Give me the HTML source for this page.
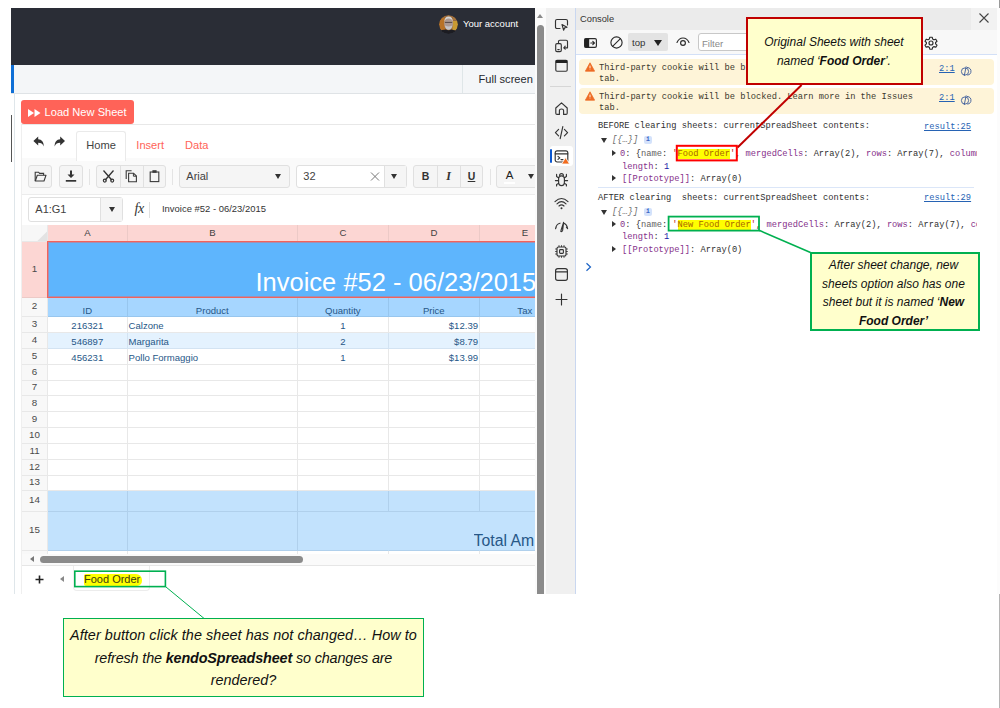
<!DOCTYPE html>
<html lang="en">
<head>
<meta charset="utf-8">
<title>kendoSpreadsheet refresh question</title>
<style>
*{box-sizing:border-box;margin:0;padding:0}
html,body{width:1000px;height:708px;overflow:hidden;background:#fff}
body{position:relative;font-family:"Liberation Sans",Arial,sans-serif;color:#424242}
.abs{position:absolute}
/* ---------- left: browser page ---------- */
#page{position:absolute;left:11px;top:8px;width:524px;height:586px;overflow:hidden;background:#fff}
#hdr{position:absolute;left:0;top:0;width:526px;height:57px;background:#2a2d36}
#acct{position:absolute;left:452px;top:10px;color:#fff;font-size:9.5px;line-height:12px;white-space:nowrap}
#avatar{position:absolute;left:427.5px;top:6.5px;width:19px;height:19px;border-radius:50%;overflow:hidden}
#bar{position:absolute;left:0;top:57px;width:526px;height:29px;background:#f4f6f8;border-bottom:1px solid #dfe3e6}
#bar .blue{position:absolute;left:0;top:0;width:3px;height:28px;background:#0f6fd6}
#bar .sep{position:absolute;left:451px;top:0;width:1px;height:28px;background:#dfe6e8}
#bar .fs{position:absolute;left:467.6px;top:6.5px;font-size:11.1px;line-height:14px;color:#24282e;white-space:nowrap}

/* spreadsheet chrome */
#vline{position:absolute;left:3px;top:86px;width:1px;height:500px;background:#dfe6ea}
#tick{position:absolute;left:0;top:107px;width:1px;height:47px;background:#555}
#load{position:absolute;left:10px;top:92px;width:113px;height:24px;background:#ff6358;border-radius:3px;color:#fff;font-size:11.1px;line-height:24.5px;white-space:nowrap;padding-left:6.8px}
#load svg{vertical-align:-0.5px;margin-right:3.8px}
#ss{position:absolute;left:10px;top:116px;width:520px;height:470px;border-top:1px solid #e8e8e8;border-left:1px solid #efefef;background:#fff}
#tabs{position:absolute;left:0;top:0;width:520px;height:33.5px;border-bottom:1px solid #e4e4e4}
#tabs .home{z-index:2;position:absolute;left:54px;top:6px;width:50px;height:29.5px;border:1px solid #eaeaea;border-bottom:0;border-radius:3px 3px 0 0;background:#fff;font-size:11.1px;line-height:27px;text-align:center;color:#424242}
#tabs .t{position:absolute;top:13px;font-size:11.1px;line-height:14px;color:#ff6358}
#tb{position:absolute;left:0;top:33px;width:520px;height:36.5px;background:#fafafa;border-bottom:1px solid #ececec}
.btn{position:absolute;top:7px;height:23px;background:#f5f5f5;border:1px solid #e0e0e0;border-radius:3px}
.vsep{position:absolute;top:11px;width:1px;height:16px;background:#e4e4e4}
.dv{position:absolute;top:0;width:1px;height:21px;background:#e0e0e0}
.ic{position:absolute;top:0;height:21px}
#fb{position:absolute;left:0;top:71px;width:520px;height:29px;background:#fff}
.lbl{position:absolute;left:6.3px;top:0;font-size:11px;line-height:21px;color:#424242}
.arr{position:absolute;top:8px;width:0;height:0;border-left:3.5px solid transparent;border-right:3.5px solid transparent;border-top:5px solid #333}
.ddb{position:absolute;top:0;height:21px;background:#f5f5f5;border-left:1px solid #e0e0e0}
.biu{position:absolute;top:0;width:23px;text-align:center;font-size:10.5px;line-height:21px;color:#333}
/* grid */
#grid{position:absolute;left:0;top:0;width:524px;height:586px;pointer-events:none}
.c{position:absolute;overflow:hidden;border-right:1px solid #e8e8e8;border-bottom:1px solid #e8e8e8;font-size:9.55px;white-space:nowrap;color:#275787}
.ch{background:#fcd6d3;border-color:#eccac7;text-align:center;color:#424242;line-height:15px;font-size:9.6px}
.rh{background:#f8f8f8;text-align:center;color:#4a4a4a;font-size:9.8px}
.rh.sel{background:#fcd6d3;border-color:#eccac7}
.d{line-height:15px}
.d span{position:absolute;bottom:-1.3px;left:0.6px;right:1px}
.ac span{text-align:center}.ar span{text-align:right}.al span{text-align:left}
.b2{background:#a6d6ff;border-color:#97c6ee}.b4{background:#e4f2fe;border-color:#d3e3f2}
.b14,.b15{background:#c2e2fd;border-color:#b0d0ec}
.r2 span{bottom:-2px}
#title{position:absolute;left:36px;top:233px;width:500px;height:57px;background:#5eb5fd;border:1px solid #f4625a;box-shadow:inset 0 0 0 1px rgba(244,98,90,.45);overflow:hidden}
#title span{position:absolute;left:207.5px;bottom:1px;font-size:25.5px;line-height:28px;color:#fff;white-space:nowrap}
/* bottom of spreadsheet */
#hs{position:absolute;left:11px;top:546px;width:513px;height:12px;background:#fafafa;border-bottom:1px solid #e6e6e6}
#hs .thumb{position:absolute;left:18px;top:2px;width:263px;height:7px;border-radius:4px;background:#8b8b8b}
#hs .la{position:absolute;left:8px;top:2px;width:0;height:0;border-top:3.5px solid transparent;border-bottom:3.5px solid transparent;border-right:4px solid #777}
#sheets{position:absolute;left:11px;top:558px;width:513px;height:28px;background:#fff}
#sheets .plus{position:absolute;left:13px;top:9px;width:9px;height:9px}
#sheets .pa{position:absolute;left:38px;top:10px;width:0;height:0;border-top:3px solid transparent;border-bottom:3px solid transparent;border-right:4px solid #888}
#sheets .tab{position:absolute;left:51px;top:0;width:77px;height:25px;border:1px solid #ececec;border-top:0;border-radius:0 0 4px 4px;background:#fff}
#sheets .name{position:absolute;left:62px;top:7px;font-size:11px;line-height:13px;color:#3a3a10;white-space:nowrap;z-index:2}
#sheets .hl{position:absolute;left:62px;top:8px;width:58px;height:12px;background:#ffff00;border-radius:2px 6px 5px 2px}
/* ---------- scrollbar + devtools ---------- */
#vs{position:absolute;left:535px;top:8px;width:11px;height:586px;background:#fbfbfb;overflow:hidden}
#vs .up{position:absolute;left:2px;top:6px;width:0;height:0;border-left:3.5px solid transparent;border-right:3.5px solid transparent;border-bottom:4.5px solid #8a8a8a}
#vs .thumb{position:absolute;left:2.3px;top:16.5px;width:7px;height:580px;border-radius:4px;background:#8b8b8b}
#act{position:absolute;left:546px;top:8px;width:29px;height:586px;background:#f0f0f0}
#act svg{position:absolute;left:8px;width:15px;height:15px;overflow:visible}
#act .sepl{position:absolute;left:4px;top:78px;width:21px;height:1px;background:#d6d6d6}
#act .active{position:absolute;left:4px;top:138px;width:23px;height:20px;background:#fff;border-radius:3px}
#act .abar{position:absolute;left:4px;top:141px;width:2px;height:14px;background:#0b57d0;border-radius:1px}
#con{position:absolute;left:575px;top:8px;width:425px;height:586px;background:#fff;border-left:1px solid #c9d7f0;overflow:hidden}
#chead{position:absolute;left:0;top:0;width:424px;height:22px;background:#ebebeb}
#chead .t{position:absolute;left:4px;top:4px;font-size:9.3px;line-height:14px;color:#333}
#ctool{position:absolute;left:0;top:22px;width:424px;height:25px;background:#f8f8f8;border-bottom:1px solid #d3e0f7}
#ctool svg{position:absolute;overflow:visible}
#ctool .top{position:absolute;left:52px;top:3px;width:40px;height:18px;background:#e3e3e3;border-radius:2px;font-size:9.6px;line-height:20px;color:#333;padding-left:4px;overflow:hidden}
#ctool .top i{position:absolute;left:26px;top:7px;width:0;height:0;border-left:4px solid transparent;border-right:4px solid transparent;border-top:6px solid #222}
#ctool .filter{position:absolute;left:122px;top:3px;width:218px;height:18px;border:1px solid #c8c8c8;border-radius:3px;background:#fff;font-size:9.6px;line-height:19px;color:#8a8a8a;padding-left:3px;overflow:hidden}
.mono{font-family:"Liberation Mono","DejaVu Sans Mono",monospace;font-size:8.72px;white-space:pre;color:#303030}
.warn{position:absolute;left:3px;width:415px;height:26px;background:#fef4d8;border-radius:4px}
.warn .tx{position:absolute;left:20px;top:3.9px;line-height:11.5px;color:#3d3a2e}
.warn svg{position:absolute;left:6px;top:3px}
.lnk{position:absolute;color:#2763b4;text-decoration:underline;line-height:12px}
.ln{position:absolute;line-height:12px}
.k{color:#86318a}.s{color:#c02a1d}.n{color:#1a1aa6}.g{color:#6e6e6e;font-style:italic}
.hy{background:#ffff00;color:#a86400}
.tri-d{position:absolute;width:0;height:0;border-left:3.4px solid transparent;border-right:3.4px solid transparent;border-top:5.4px solid #333}
.tri-r{position:absolute;width:0;height:0;border-top:3.4px solid transparent;border-bottom:3.4px solid transparent;border-left:4.8px solid #333}
.info{position:absolute;width:8px;height:8px;background:#d4e2fb;border-radius:2px;color:#3b65c4;font-size:6.5px;line-height:8px;text-align:center;font-family:"Liberation Mono",monospace;font-weight:bold}
/* ---------- annotations ---------- */
.co{position:absolute;background:#ffffcc;font-style:italic;color:#111;text-align:center;white-space:nowrap}
.co div{position:absolute;left:0;width:100%}
#co2 div{left:-1.2px}#co1 div{left:-0.4px}
.co b{font-weight:bold}
#ov{position:absolute;left:0;top:0;width:1000px;height:708px;pointer-events:none}
#edge{position:absolute;left:999px;top:594px;width:1px;height:114px;background:#b5b5b5}
</style>
</head>
<body>
<div id="page">
  <div id="hdr">
    <div id="avatar"><svg width="19" height="19" viewBox="0 0 19 19"><defs><filter id="bl" x="-10%" y="-10%" width="120%" height="120%"><feGaussianBlur stdDeviation="0.55"/></filter><clipPath id="avc"><circle cx="9.5" cy="9.5" r="9.5"/></clipPath></defs><g clip-path="url(#avc)"><g filter="url(#bl)"><rect x="-2" y="-2" width="23" height="23" fill="#9a6a3a"/><rect x="-2" y="3" width="8" height="12" fill="#b87228"/><rect x="13.5" y="6" width="8" height="9" fill="#c99a32"/><rect x="14" y="-2" width="7" height="7" fill="#a9743a"/><ellipse cx="9.6" cy="8.8" rx="4.5" ry="5.8" fill="#ab9891"/><path d="M5.3 7Q5.3 1.4 9.6 1.4Q13.9 1.4 13.9 7Q12.6 3.6 9.6 3.6Q6.6 3.6 5.3 7Z" fill="#d6d6d6"/><path d="M6 7.4H13.2" stroke="#4a3e3c" stroke-width="0.9"/><path d="M6 10.6Q9.6 12.4 13.2 10.6Q12.8 14.8 9.6 14.8Q6.4 14.8 6 10.6Z" fill="#c4c4c8"/><path d="M-2 21V16.4Q4 14.6 6.6 14.4Q9.6 16 12.6 14.4Q16 14.8 21 17.4V21Z" fill="#1d1e24"/></g></g></svg></div>
    <div id="acct">Your account</div>
  </div>
  <div id="bar"><div class="blue"></div><div class="sep"></div><div class="fs">Full screen</div></div>
  <div id="vline"></div><div id="tick"></div>
  <div id="load"><svg width="13" height="8" viewBox="0 0 13 8"><path d="M0 0L6 4L0 8Z M6.5 0L12.5 4L6.5 8Z" fill="#fff"/></svg>Load New Sheet</div>
  <div id="ss">
    <div id="tabs">
      <svg class="abs" style="left:11px;top:11px" width="34" height="12" viewBox="0 0 34 12"><path d="M5.2 0.6L0.4 5L5.2 9.4V6.8C8 6.8 9.8 7.8 10.8 10.6C10.8 6 8.8 3.6 5.2 3.3Z" fill="#333"/><path d="M27.2 0.6L32 5L27.2 9.4V6.8C24.4 6.8 22.6 7.8 21.6 10.6C21.6 6 23.6 3.6 27.2 3.3Z" fill="#333"/></svg>
      <div class="home">Home</div>
      <div class="t" style="left:114.3px">Insert</div>
      <div class="t" style="left:163px">Data</div>
    </div>
    <div id="tb">
      <div class="btn" style="left:6px;width:24px"><svg class="ic" style="left:5px" width="13" height="21" viewBox="0 0 13 21"><path d="M1.2 15V6.2H4.6L5.6 7.4H9.6V9.2" fill="none" stroke="#3a3a3a" stroke-width="1.1"/><path d="M1.3 15L3.3 9.3H12L10 15Z" fill="none" stroke="#3a3a3a" stroke-width="1.1" stroke-linejoin="round"/></svg></div>
      <div class="btn" style="left:37px;width:24px"><svg class="ic" style="left:5px" width="12" height="21" viewBox="0 0 12 21"><path d="M5 4.5H7V8.5H9.5L6 12L2.5 8.5H5Z" fill="#333"/><rect x="0.8" y="14" width="10.4" height="1.7" fill="#333"/></svg></div>
      <div class="vsep" style="left:67px"></div>
      <div class="btn" style="left:74px;width:70px"><div class="dv" style="left:23px"></div><div class="dv" style="left:46px"></div>
        <svg class="ic" style="left:5px" width="13" height="21" viewBox="0 0 13 21"><path d="M1.5 4.5L10 14.2M11.5 4.5L3 14.2" stroke="#333" stroke-width="1.3" fill="none"/><circle cx="2.8" cy="14.6" r="1.5" fill="none" stroke="#333" stroke-width="1.1"/><circle cx="10.2" cy="14.6" r="1.5" fill="none" stroke="#333" stroke-width="1.1"/></svg>
        <svg class="ic" style="left:28px" width="13" height="21" viewBox="0 0 13 21"><path d="M1.2 13V4.8H6.6" fill="none" stroke="#3a3a3a" stroke-width="1.1"/><path d="M3.6 7.2H8.6L11.4 10V15.8H3.6Z" fill="none" stroke="#3a3a3a" stroke-width="1.1"/><path d="M8.4 7.2V10.2H11.4" fill="none" stroke="#3a3a3a" stroke-width="1"/></svg>
        <svg class="ic" style="left:51px" width="13" height="21" viewBox="0 0 13 21"><rect x="2.2" y="6" width="8.6" height="9.6" fill="none" stroke="#3a3a3a" stroke-width="1.1"/><rect x="4.4" y="4.2" width="4.2" height="2.6" fill="#3a3a3a"/></svg>
      </div>
      <div class="vsep" style="left:150px"></div>
      <div class="btn" style="left:157px;width:111px"><span class="lbl">Arial</span><span class="arr" style="left:95px"></span></div>
      <div class="btn" style="left:274px;width:111px;background:#fff"><span class="lbl">32</span><svg class="ic" style="left:72px" width="12" height="21" viewBox="0 0 12 21"><path d="M2 6.5L10 14.5M10 6.5L2 14.5" stroke="#777" stroke-width="1"/></svg><div class="ddb" style="left:87px;width:22px"><span class="arr" style="left:6px"></span></div></div>
      <div class="btn" style="left:391px;width:70px"><div class="dv" style="left:23px"></div><div class="dv" style="left:46px"></div>
        <span class="biu" style="left:0;font-weight:bold">B</span><span class="biu" style="left:23px;font-style:italic;font-family:'Liberation Serif',serif;font-weight:bold;font-size:12px">I</span><span class="biu" style="left:46px;font-weight:bold;text-decoration:underline">U</span>
      </div>
      <div class="vsep" style="left:468px"></div>
      <div class="btn" style="left:474px;width:60px"><span class="biu" style="left:1px;font-weight:normal;font-size:11.5px;color:#222;top:-1.2px">A</span><div class="abs" style="left:7px;top:16px;width:11px;height:2px;background:#fff"></div><span class="arr" style="left:31px"></span></div>
    </div>
    <div id="fb">
      <div class="btn" style="left:6px;top:1px;width:95px;height:24.5px;background:#fff"><span class="lbl" style="left:6.3px;font-size:11px;line-height:22.5px">A1:G1</span><div class="ddb" style="left:71px;width:22px;height:22.5px"><span class="arr" style="left:7.5px;top:9.3px"></span></div></div>
      <div class="abs" style="left:112.5px;top:4.5px;font-family:'Liberation Serif',serif;font-style:italic;font-size:14px;line-height:16px;color:#333;letter-spacing:-0.5px"><b style="font-weight:normal">f</b>x</div>
      <div class="abs" style="left:127px;top:6px;width:1px;height:16px;background:#e0e0e0"></div>
      <div class="abs" style="left:140px;top:6px;font-size:9.45px;line-height:14px;color:#333;white-space:nowrap">Invoice #52 - 06/23/2015</div>
    </div>
  </div>
  <div id="grid">
      <div class="c " style="left:11px;top:217px;width:26px;height:17px;background:#f7f7f7"><svg width="26" height="16" viewBox="0 0 26 16" style="position:absolute;left:0;top:0"><path d="M25 6.4V16H15.4Z" fill="#e3e3e3"/></svg></div>
      <div class="c ch" style="left:37px;top:217px;width:80px;height:17px;"><span>A</span></div>
      <div class="c ch" style="left:117px;top:217px;width:170px;height:17px;"><span>B</span></div>
      <div class="c ch" style="left:287px;top:217px;width:91px;height:17px;"><span>C</span></div>
      <div class="c ch" style="left:378px;top:217px;width:91px;height:17px;"><span>D</span></div>
      <div class="c ch" style="left:469px;top:217px;width:91px;height:17px;"><span>E</span></div>
      <div class="c rh sel" style="left:11px;top:234px;width:26px;height:56px;line-height:53.5px">1</div>
      <div class="c rh" style="left:11px;top:290px;width:26px;height:19px;line-height:16.5px">2</div>
      <div class="c rh" style="left:11px;top:309px;width:26px;height:16px;line-height:13.5px">3</div>
      <div class="c rh" style="left:11px;top:325px;width:26px;height:16px;line-height:13.5px">4</div>
      <div class="c rh" style="left:11px;top:341px;width:26px;height:16px;line-height:13.5px">5</div>
      <div class="c rh" style="left:11px;top:357px;width:26px;height:16px;line-height:13.5px">6</div>
      <div class="c rh" style="left:11px;top:373px;width:26px;height:15px;line-height:12.5px">7</div>
      <div class="c rh" style="left:11px;top:388px;width:26px;height:16px;line-height:13.5px">8</div>
      <div class="c rh" style="left:11px;top:404px;width:26px;height:16px;line-height:13.5px">9</div>
      <div class="c rh" style="left:11px;top:420px;width:26px;height:16px;line-height:13.5px">10</div>
      <div class="c rh" style="left:11px;top:436px;width:26px;height:16px;line-height:13.5px">11</div>
      <div class="c rh" style="left:11px;top:452px;width:26px;height:16px;line-height:13.5px">12</div>
      <div class="c rh" style="left:11px;top:468px;width:26px;height:15px;line-height:12.5px">13</div>
      <div class="c rh" style="left:11px;top:483px;width:26px;height:21px;line-height:18.5px">14</div>
      <div class="c rh" style="left:11px;top:504px;width:26px;height:39px;line-height:36.5px">15</div>
      <div class="c rh" style="left:11px;top:543px;width:26px;height:4px;"></div>
      <div class="c d b2 ac r2" style="left:37px;top:290px;width:80px;height:19px;"><span>ID</span></div>
      <div class="c d b2 ac r2" style="left:117px;top:290px;width:170px;height:19px;"><span>Product</span></div>
      <div class="c d b2 ac r2" style="left:287px;top:290px;width:91px;height:19px;"><span>Quantity</span></div>
      <div class="c d b2 ac r2" style="left:378px;top:290px;width:91px;height:19px;"><span>Price</span></div>
      <div class="c d b2 ac r2" style="left:469px;top:290px;width:91px;height:19px;"><span>Tax</span></div>
      <div class="c d ac" style="left:37px;top:309px;width:80px;height:16px;"><span>216321</span></div>
      <div class="c d al" style="left:117px;top:309px;width:170px;height:16px;"><span>Calzone</span></div>
      <div class="c d ac" style="left:287px;top:309px;width:91px;height:16px;"><span>1</span></div>
      <div class="c d ar" style="left:378px;top:309px;width:91px;height:16px;"><span>$12.39</span></div>
      <div class="c d" style="left:469px;top:309px;width:91px;height:16px;"></div>
      <div class="c d b4 ac" style="left:37px;top:325px;width:80px;height:16px;"><span>546897</span></div>
      <div class="c d b4 al" style="left:117px;top:325px;width:170px;height:16px;"><span>Margarita</span></div>
      <div class="c d b4 ac" style="left:287px;top:325px;width:91px;height:16px;"><span>2</span></div>
      <div class="c d b4 ar" style="left:378px;top:325px;width:91px;height:16px;"><span>$8.79</span></div>
      <div class="c d b4" style="left:469px;top:325px;width:91px;height:16px;"></div>
      <div class="c d ac" style="left:37px;top:341px;width:80px;height:16px;"><span>456231</span></div>
      <div class="c d al" style="left:117px;top:341px;width:170px;height:16px;"><span>Pollo Formaggio</span></div>
      <div class="c d ac" style="left:287px;top:341px;width:91px;height:16px;"><span>1</span></div>
      <div class="c d ar" style="left:378px;top:341px;width:91px;height:16px;"><span>$13.99</span></div>
      <div class="c d" style="left:469px;top:341px;width:91px;height:16px;"></div>
      <div class="c d" style="left:37px;top:357px;width:80px;height:16px;"></div>
      <div class="c d" style="left:117px;top:357px;width:170px;height:16px;"></div>
      <div class="c d" style="left:287px;top:357px;width:91px;height:16px;"></div>
      <div class="c d" style="left:378px;top:357px;width:91px;height:16px;"></div>
      <div class="c d" style="left:469px;top:357px;width:91px;height:16px;"></div>
      <div class="c d" style="left:37px;top:373px;width:80px;height:15px;"></div>
      <div class="c d" style="left:117px;top:373px;width:170px;height:15px;"></div>
      <div class="c d" style="left:287px;top:373px;width:91px;height:15px;"></div>
      <div class="c d" style="left:378px;top:373px;width:91px;height:15px;"></div>
      <div class="c d" style="left:469px;top:373px;width:91px;height:15px;"></div>
      <div class="c d" style="left:37px;top:388px;width:80px;height:16px;"></div>
      <div class="c d" style="left:117px;top:388px;width:170px;height:16px;"></div>
      <div class="c d" style="left:287px;top:388px;width:91px;height:16px;"></div>
      <div class="c d" style="left:378px;top:388px;width:91px;height:16px;"></div>
      <div class="c d" style="left:469px;top:388px;width:91px;height:16px;"></div>
      <div class="c d" style="left:37px;top:404px;width:80px;height:16px;"></div>
      <div class="c d" style="left:117px;top:404px;width:170px;height:16px;"></div>
      <div class="c d" style="left:287px;top:404px;width:91px;height:16px;"></div>
      <div class="c d" style="left:378px;top:404px;width:91px;height:16px;"></div>
      <div class="c d" style="left:469px;top:404px;width:91px;height:16px;"></div>
      <div class="c d" style="left:37px;top:420px;width:80px;height:16px;"></div>
      <div class="c d" style="left:117px;top:420px;width:170px;height:16px;"></div>
      <div class="c d" style="left:287px;top:420px;width:91px;height:16px;"></div>
      <div class="c d" style="left:378px;top:420px;width:91px;height:16px;"></div>
      <div class="c d" style="left:469px;top:420px;width:91px;height:16px;"></div>
      <div class="c d" style="left:37px;top:436px;width:80px;height:16px;"></div>
      <div class="c d" style="left:117px;top:436px;width:170px;height:16px;"></div>
      <div class="c d" style="left:287px;top:436px;width:91px;height:16px;"></div>
      <div class="c d" style="left:378px;top:436px;width:91px;height:16px;"></div>
      <div class="c d" style="left:469px;top:436px;width:91px;height:16px;"></div>
      <div class="c d" style="left:37px;top:452px;width:80px;height:16px;"></div>
      <div class="c d" style="left:117px;top:452px;width:170px;height:16px;"></div>
      <div class="c d" style="left:287px;top:452px;width:91px;height:16px;"></div>
      <div class="c d" style="left:378px;top:452px;width:91px;height:16px;"></div>
      <div class="c d" style="left:469px;top:452px;width:91px;height:16px;"></div>
      <div class="c d" style="left:37px;top:468px;width:80px;height:15px;"></div>
      <div class="c d" style="left:117px;top:468px;width:170px;height:15px;"></div>
      <div class="c d" style="left:287px;top:468px;width:91px;height:15px;"></div>
      <div class="c d" style="left:378px;top:468px;width:91px;height:15px;"></div>
      <div class="c d" style="left:469px;top:468px;width:91px;height:15px;"></div>
      <div class="c d b14" style="left:37px;top:483px;width:80px;height:21px;"></div>
      <div class="c d b14" style="left:117px;top:483px;width:170px;height:21px;"></div>
      <div class="c d b14" style="left:287px;top:483px;width:91px;height:21px;"></div>
      <div class="c d b14" style="left:378px;top:483px;width:91px;height:21px;"></div>
      <div class="c d b14" style="left:469px;top:483px;width:91px;height:21px;"></div>
      <div class="c d b15" style="left:37px;top:504px;width:80px;height:39px;"></div>
      <div class="c d b15" style="left:117px;top:504px;width:170px;height:39px;"></div>
      <div class="c d b15" style="left:287px;top:504px;width:91px;height:39px;border-right-color:transparent"></div>
      <div class="c d b15" style="left:378px;top:504px;width:91px;height:39px;border-right-color:transparent"></div>
      <div class="c d b15" style="left:469px;top:504px;width:91px;height:39px;"></div>
      <div class="c d" style="left:37px;top:543px;width:80px;height:4px;"></div>
      <div class="c d" style="left:117px;top:543px;width:170px;height:4px;"></div>
      <div class="c d" style="left:287px;top:543px;width:91px;height:4px;"></div>
      <div class="c d" style="left:378px;top:543px;width:91px;height:4px;"></div>
      <div class="c d" style="left:469px;top:543px;width:91px;height:4px;"></div>
    <div id="title"><span>Invoice #52 - 06/23/2015</span></div>
    <div class="abs" style="left:462.6px;top:523.4px;width:60.2px;overflow:hidden;font-size:15.8px;line-height:20px;color:#275787;white-space:nowrap">Total Amount:</div>
  </div>
  <div id="hs"><div class="la"></div><div class="thumb"></div></div>
  <div id="sheets">
    <svg class="plus" viewBox="0 0 9 9"><path d="M4.5 0.5V8.5M0.5 4.5H8.5" stroke="#222" stroke-width="1.6"/></svg>
    <div class="pa"></div>
    <div class="tab"></div>
    <div class="hl"></div>
    <div class="name">Food Order</div>
  </div>
</div>
<div id="vs"><div class="up"></div><div class="thumb"></div></div>
<div id="act">
  <div class="sepl"></div><div class="active"></div><div class="abar"></div>
  <svg viewBox="0 0 15 15" style="top:8.7px"><path d="M6 11.5H3Q1.5 11.5 1.5 10V4Q1.5 2.5 3 2.5H12Q13.5 2.5 13.5 4V8" fill="none" stroke="#333" stroke-width="1.15" stroke-linecap="round" stroke-linejoin="round"/><path d="M8 7.5L13 10.2L10.6 10.9L9.6 13.2Z" fill="none" stroke="#333" stroke-width="1.15" stroke-linecap="round" stroke-linejoin="round"/></svg>
  <svg viewBox="0 0 15 15" style="top:29.5px"><path d="M4.5 4.5V3.5Q4.5 2.2 5.8 2.2H12.2Q13.5 2.2 13.5 3.5V9.8H10" fill="none" stroke="#333" stroke-width="1.15" stroke-linecap="round" stroke-linejoin="round"/><rect x="1.7" y="5.6" width="5.6" height="8" rx="1.3" fill="none" stroke="#333" stroke-width="1.15" stroke-linecap="round" stroke-linejoin="round"/><path d="M3.8 11.6H5.2M11.2 8.2L10 9.8L11.2 11.2" fill="none" stroke="#333" stroke-width="1.15" stroke-linecap="round" stroke-linejoin="round"/></svg>
  <svg viewBox="0 0 15 15" style="top:50px"><rect x="1.8" y="2.2" width="11.4" height="11" rx="1.2" fill="none" stroke="#333" stroke-width="1.15" stroke-linecap="round" stroke-linejoin="round"/><rect x="1.8" y="2" width="11.4" height="3" fill="#222"/></svg>
  <svg viewBox="0 0 15 15" style="top:93px"><path d="M1.8 7L7.5 1.8L13.2 7V12.2Q13.2 13.4 12 13.4H9.6V9.4Q9.6 8 7.5 8Q5.4 8 5.4 9.4V13.4H3Q1.8 13.4 1.8 12.2Z" fill="none" stroke="#333" stroke-width="1.15" stroke-linecap="round" stroke-linejoin="round"/></svg>
  <svg viewBox="0 0 15 15" style="top:117px"><path d="M4.6 4.4L1.4 7.6L4.6 10.8M10.4 4.4L13.6 7.6L10.4 10.8M8.8 1.6L6.2 13.6" fill="none" stroke="#333" stroke-width="1.15" stroke-linecap="round" stroke-linejoin="round"/></svg>
  <svg viewBox="0 0 15 15" style="top:141px"><rect x="1.2" y="1.8" width="12.6" height="11.2" rx="2" fill="none" stroke="#333" stroke-width="1.15" stroke-linecap="round" stroke-linejoin="round"/><path d="M1.2 4.8H13.8M4 7.4L5.8 8.9L4 10.4M7 10.6H9" fill="none" stroke="#333" stroke-width="1.15" stroke-linecap="round" stroke-linejoin="round"/><path d="M11.6 8.6L15.6 15H7.6Z" fill="#f26b1d" stroke="#fff" stroke-width="0.8"/></svg>
  <svg viewBox="0 0 15 15" style="top:164px"><path d="M4.6 7Q4.6 3.8 7.5 3.8Q10.4 3.8 10.4 7V10Q10.4 13.6 7.5 13.6Q4.6 13.6 4.6 10ZM5.6 3.6Q5.6 1.6 7.5 1.6Q9.4 1.6 9.4 3.6M4.6 8.6H1.4M10.4 8.6H13.6M4.8 6L2.6 4.6V2.4M10.2 6L12.4 4.6V2.4M4.8 11.2L2.6 12.4V14M10.2 11.2L12.4 12.4V14" fill="none" stroke="#333" stroke-width="1.15" stroke-linecap="round" stroke-linejoin="round"/></svg>
  <svg viewBox="0 0 15 15" style="top:188px"><path d="M1 5.6Q7.5 -0.6 14 5.6M3 7.8Q7.5 3.4 12 7.8M5 10Q7.5 7.6 10 10" fill="none" stroke="#333" stroke-width="1.15" stroke-linecap="round" stroke-linejoin="round"/><circle cx="7.5" cy="12.3" r="1" fill="#333"/></svg>
  <svg viewBox="0 0 15 15" style="top:211px"><path d="M1.6 9.6Q2.2 5 6 4.2M9.8 4.2Q13 5.4 13.6 9.6M1.6 9.6L2.2 8M13.6 9.6L12.4 8.2" fill="none" stroke="#333" stroke-width="1.15" stroke-linecap="round" stroke-linejoin="round"/><path d="M9.6 3.4L7 11.4Q6.4 12.6 7.4 12.6Q8.2 12.6 8.6 11.4Z" fill="none" stroke="#333" stroke-width="1.15" stroke-linecap="round" stroke-linejoin="round"/></svg>
  <svg viewBox="0 0 15 15" style="top:235.5px"><rect x="3" y="3" width="9" height="9" rx="1.6" fill="none" stroke="#333" stroke-width="1.15" stroke-linecap="round" stroke-linejoin="round"/><rect x="5.6" y="5.6" width="3.8" height="3.8" rx="0.8" fill="none" stroke="#333" stroke-width="1.15" stroke-linecap="round" stroke-linejoin="round"/><path d="M5 1.2V3M7.5 1.2V3M10 1.2V3M5 12V13.8M7.5 12V13.8M10 12V13.8M1.2 5H3M1.2 7.5H3M1.2 10H3M12 5H13.8M12 7.5H13.8M12 10H13.8" fill="none" stroke="#333" stroke-width="0.9"/></svg>
  <svg viewBox="0 0 15 15" style="top:259px"><rect x="1.6" y="1.6" width="11.8" height="11.8" rx="2.2" fill="none" stroke="#333" stroke-width="1.15" stroke-linecap="round" stroke-linejoin="round"/><path d="M1.6 4.8H13.4" fill="none" stroke="#333" stroke-width="1.15" stroke-linecap="round" stroke-linejoin="round"/></svg>
  <svg viewBox="0 0 15 15" style="top:284px"><path d="M7.5 2V13M2 7.5H13" fill="none" stroke="#333" stroke-width="1.15" stroke-linecap="round" stroke-linejoin="round"/></svg>
</div>
<div id="con">
  <div id="chead"><div class="t">Console</div><div class="abs" style="left:395px;top:0;width:26px;height:22px;background:#f2f2f2"></div></div>
  <div id="ctool">
    <svg style="left:8px;top:7.6px" width="13" height="10" viewBox="0 0 13 10"><rect x="0.6" y="0.6" width="11.8" height="8.8" rx="1.4" fill="none" stroke="#2b2b2b" stroke-width="1.15" stroke-linecap="round" stroke-linejoin="round"/><rect x="0.6" y="0.6" width="4.6" height="8.8" fill="#222"/><path d="M6.8 5H10M8.8 3.4L10.4 5L8.8 6.6" fill="none" stroke="#2b2b2b" stroke-width="1.15" stroke-linecap="round" stroke-linejoin="round"/></svg>
    <svg style="left:34px;top:6px" width="13" height="13" viewBox="0 0 13 13"><circle cx="6.5" cy="6.5" r="5.6" fill="none" stroke="#2b2b2b" stroke-width="1.15" stroke-linecap="round" stroke-linejoin="round"/><path d="M2.6 10.4L10.4 2.6" fill="none" stroke="#2b2b2b" stroke-width="1.15" stroke-linecap="round" stroke-linejoin="round"/></svg>
    <div class="top">top<i></i></div>
    <svg style="left:100px;top:7px" width="14" height="10" viewBox="0 0 14 10"><path d="M1 5.4Q3 1 7 1Q11 1 13 5.4" fill="none" stroke="#2b2b2b" stroke-width="1.15" stroke-linecap="round" stroke-linejoin="round"/><circle cx="7" cy="6" r="2.4" fill="none" stroke="#2b2b2b" stroke-width="1.15" stroke-linecap="round" stroke-linejoin="round"/></svg>
    <div class="filter">Filter</div>
    <svg style="left:347.7px;top:5.7px" width="14" height="14" viewBox="0 0 14 14"><circle cx="7" cy="7" r="2" fill="none" stroke="#2b2b2b" stroke-width="1.15" stroke-linecap="round" stroke-linejoin="round"/><path d="M5.8 1.2H8.2L8.6 3L10 3.8L11.8 3.2L13 5.3L11.6 6.5V7.9L13 9.1L11.8 11.2L10 10.6L8.6 11.4L8.2 13.2H5.8L5.4 11.4L4 10.6L2.2 11.2L1 9.1L2.4 7.9V6.5L1 5.3L2.2 3.2L4 3.8L5.4 3Z" fill="none" stroke="#2b2b2b" stroke-width="1.15" stroke-linecap="round" stroke-linejoin="round"/></svg>
  </div>
  <div class="warn" style="top:51px"><svg width="10" height="10" viewBox="0 0 10 10"><path d="M5 0.8L9.6 9.2H0.4Z" fill="#ee6c24" stroke="#ee6c24" stroke-width="0.8" stroke-linejoin="round"/><path d="M5 3.6V6.4M5 7.6V8" stroke="#fff4e0" stroke-width="1"/></svg><div class="tx mono">Third-party cookie will be blocked. Learn more in the Issues
tab.</div><span class="lnk mono" style="left:360px;top:4px">2:1</span><svg width="13" height="12" viewBox="0 0 13 12" style="left:380.5px;top:6px"><circle cx="5" cy="6.5" r="3.6" fill="none" stroke="#3b5b9a" stroke-width="0.9"/><path d="M7 2.4Q11.8 3 10.8 7.6Q10 10 7.4 10.2M6.2 1.4L4.2 11" fill="none" stroke="#3b5b9a" stroke-width="0.9"/></svg></div>
  <div class="warn" style="top:80px"><svg width="10" height="10" viewBox="0 0 10 10"><path d="M5 0.8L9.6 9.2H0.4Z" fill="#ee6c24" stroke="#ee6c24" stroke-width="0.8" stroke-linejoin="round"/><path d="M5 3.6V6.4M5 7.6V8" stroke="#fff4e0" stroke-width="1"/></svg><div class="tx mono">Third-party cookie will be blocked. Learn more in the Issues
tab.</div><span class="lnk mono" style="left:360px;top:4px">2:1</span><svg width="13" height="12" viewBox="0 0 13 12" style="left:380.5px;top:6px"><circle cx="5" cy="6.5" r="3.6" fill="none" stroke="#3b5b9a" stroke-width="0.9"/><path d="M7 2.4Q11.8 3 10.8 7.6Q10 10 7.4 10.2M6.2 1.4L4.2 11" fill="none" stroke="#3b5b9a" stroke-width="0.9"/></svg></div>
  <div class="ln mono " style="left:22px;top:111.5px">BEFORE clearing sheets: currentSpreadSheet contents:</div>
  <span class="lnk mono" style="left:348px;top:112.5px">result:25</span>
  <div class="tri-d" style="left:25px;top:130.2px"></div>
  <div class="ln mono " style="left:36px;top:125.5px"><span class="g">[{…}]</span></div>
  <div class="info" style="left:68px;top:127.5px">i</div>
  <div class="tri-r" style="left:36.2px;top:141.6px"></div>
  <div class="ln mono " style="left:44px;top:140.2px;width:356.5px;overflow:hidden"><span class="k">0</span>: {<span class="g" style="font-style:normal;color:#5f5f5f">name</span>: <span class="s">'<span class="hy">Food Order</span>'</span>, <span class="k">mergedCells</span>: Array(2), <span class="k">rows</span>: Array(7), <span class="k">column</span></div>
  <div class="ln mono " style="left:46px;top:152.7px"><span class="k">length</span>: <span class="n">1</span></div>
  <div class="tri-r" style="left:36.2px;top:166.8px"></div>
  <div class="ln mono " style="left:46px;top:165.4px"><span class="k">[[Prototype]]</span>: Array(0)</div>
  <div class="abs" style="left:22px;top:179px;width:376px;height:1px;background:#dbe6f8"></div>
  <div class="ln mono " style="left:22px;top:183.7px">AFTER clearing  sheets: currentSpreadSheet contents:</div>
  <span class="lnk mono" style="left:348px;top:184px">result:29</span>
  <div class="tri-d" style="left:25px;top:201.8px"></div>
  <div class="ln mono " style="left:36px;top:197.5px"><span class="g">[{…}]</span></div>
  <div class="info" style="left:68px;top:199.5px">i</div>
  <div class="tri-r" style="left:36.2px;top:212.8px"></div>
  <div class="ln mono " style="left:44px;top:210.5px;width:356.5px;overflow:hidden"><span class="k">0</span>: {<span class="g" style="font-style:normal;color:#5f5f5f">name</span>: <span class="s">'<span class="hy">New Food Order</span>'</span>, <span class="k">mergedCells</span>: Array(2), <span class="k">rows</span>: Array(7), <span class="k">col</span></div>
  <div class="ln mono " style="left:46px;top:223px"><span class="k">length</span>: <span class="n">1</span></div>
  <div class="tri-r" style="left:36.2px;top:237.8px"></div>
  <div class="ln mono " style="left:46px;top:235.5px"><span class="k">[[Prototype]]</span>: Array(0)</div>
  <svg class="abs" style="left:9px;top:254px" width="7" height="10" viewBox="0 0 7 10"><path d="M1.5 1.2L5.5 5L1.5 8.8" fill="none" stroke="#1a62c5" stroke-width="1.2"/></svg>
  <svg class="abs" style="left:400.5px;top:2.8px" width="14" height="14" viewBox="0 0 14 14"><path d="M2.5 2.5L11.5 11.5M11.5 2.5L2.5 11.5" stroke="#444" stroke-width="1.1"/></svg>
  <div class="abs" style="left:420.5px;top:0;width:4px;height:586px;background:#fcfcfc"></div>
</div>
<svg id="ov" viewBox="0 0 1000 708">
  <path d="M801.6 85L737.5 147.5" stroke="#c00000" stroke-width="2" fill="none"/>
  <rect x="676.8" y="145.8" width="60" height="14.6" fill="none" stroke="#ff0000" stroke-width="2"/>
  <path d="M759 230.2L810.5 252.6" stroke="#00b050" stroke-width="1.6" fill="none"/>
  <rect x="668.6" y="216.6" width="90.4" height="14" fill="none" stroke="#00b050" stroke-width="1.8"/>
  <path d="M166 587L204 618.4" stroke="#00b050" stroke-width="1" fill="none"/>
  <rect x="74.8" y="571.2" width="90.6" height="15.4" fill="none" stroke="#00b050" stroke-width="1.6"/>
</svg>
<div class="co" id="co1" style="left:746px;top:17.2px;width:176.6px;height:68px;border:2px solid #c00000;font-size:12px;line-height:16px">
  <div style="top:15px">Original Sheets with sheet</div>
  <div style="top:33.9px">named ‘<b>Food Order</b>’.</div>
</div>
<div class="co" id="co2" style="left:809.7px;top:252px;width:170px;height:79px;border:2px solid #00b050;font-size:12px;line-height:16px">
  <div style="top:3.2px">After sheet change, new</div>
  <div style="top:21.5px">sheets option also has one</div>
  <div style="top:40px">sheet but it is named ‘<b>New</b></div>
  <div style="top:58.6px"><b>Food Order’</b></div>
</div>
<div class="co" id="co3" style="left:63.2px;top:618.2px;width:360.6px;height:78.6px;border:1px solid #00b050;font-size:14.4px;line-height:18px">
  <div style="top:7px;letter-spacing:0.07px">After button click the sheet has not changed… How to</div>
  <div style="top:29.8px;letter-spacing:-0.15px">refresh the <b>kendoSpreadsheet</b> so changes are</div>
  <div style="top:51.4px">rendered?</div>
</div>
<div id="edge"></div><div class="abs" style="left:999px;top:0;width:1px;height:7.5px;background:#9a9a9a"></div>
</body>
</html>
